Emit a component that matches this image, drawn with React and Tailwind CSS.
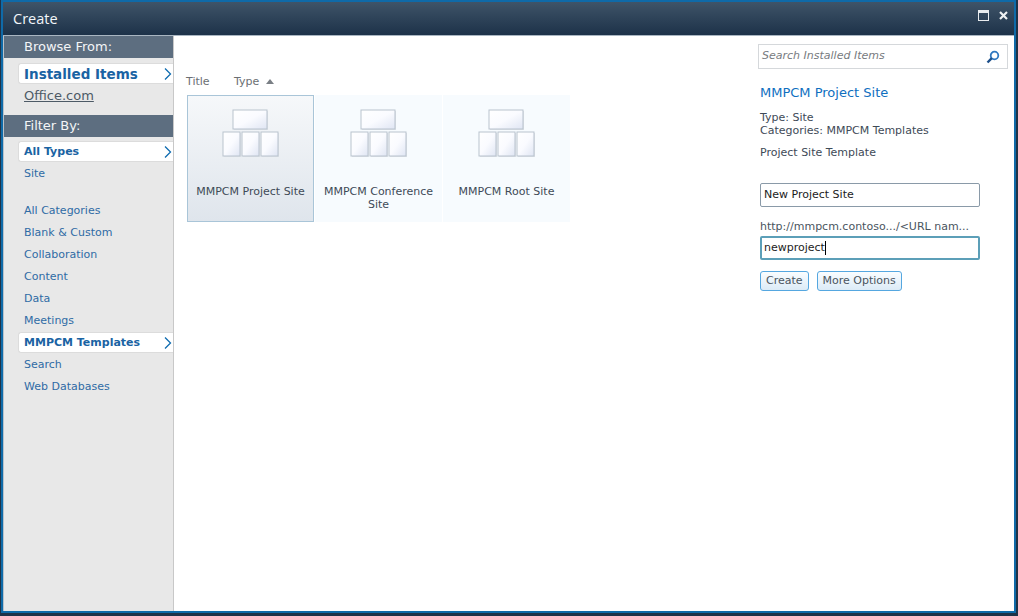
import { useId } from 'react'

const verdana = { fontFamily: "'DejaVu Sans', Verdana, sans-serif" }

function Chevron() {
  return (
    <svg width="8" height="14" viewBox="0 0 8 14" className="absolute right-[1px] top-[3px]">
      <path d="M1 1.5 L6.5 7 L1 12.5" fill="none" stroke="#0f6cb0" strokeWidth="1.3" />
    </svg>
  )
}

function NavHeader({ children }) {
  return <div className="h-[22px] bg-[#5d6e80] pl-5 text-[13px] leading-[22px] text-[#f3f5f7]">{children}</div>
}

function NavLink({ label, active, className = '' }) {
  if (active) {
    return (
      <div className={`relative ml-[14px] h-[21px] rounded-l-[3px] border border-r-0 border-[#dcdcdc] bg-white pl-[5px] text-[11px] font-bold leading-[19px] text-[#1a63a3] ${className}`}>
        {label}
        <Chevron />
      </div>
    )
  }
  return <div className={`h-[22px] pl-5 text-[11px] leading-[22px] text-[#2f6ba5] ${className}`}>{label}</div>
}

function TemplateIcon() {
  const id = useId()
  const boxes = [
    [11, 1, 34, 19],
    [1, 23, 17, 24],
    [20, 23, 17, 24],
    [39, 23, 17, 24],
  ]
  return (
    <svg width="58" height="50" viewBox="0 0 58 50">
      <defs>
        <linearGradient id={id} x1="0" y1="0" x2="1" y2="1">
          <stop offset="0" stopColor="#ffffff" />
          <stop offset="0.5" stopColor="#fafbff" />
          <stop offset="1" stopColor="#dfe5f3" />
        </linearGradient>
      </defs>
      {boxes.map(([x, y, w, h]) => (
        <g key={x + '-' + y}>
          <rect x={x + 1} y={y + 1} width={w} height={h} fill="#dfe3e8" />
          <rect x={x} y={y} width={w} height={h} fill={`url(#${id})`} stroke="#b9c3ce" />
        </g>
      ))}
    </svg>
  )
}

function Tile({ title, selected }) {
  return (
    <div
      className={
        'flex h-[127px] w-[127px] flex-col items-center pt-[13px] ' +
        (selected
          ? 'border border-[#a9c5d8] bg-gradient-to-b from-[#f6f8fa] to-[#dfe5ec]'
          : 'border border-transparent bg-[#f7fbfe]')
      }
    >
      <TemplateIcon />
      <div className="mt-[26px] w-[116px] text-center text-[11px] leading-[13px] text-[#3e4a57]">{title}</div>
    </div>
  )
}

export default function App() {
  const filters = ['All Categories', 'Blank & Custom', 'Collaboration', 'Content', 'Data', 'Meetings']

  return (
    <div className="flex h-[616px] w-[1018px] flex-col overflow-hidden bg-[#1f3348] pb-[3px] pl-[1px] pr-[2px] pt-0" style={verdana}>
      <div className="flex min-h-0 flex-1 flex-col border-[2px] border-[#0f6aa8]">
        {/* title bar */}
        <div className="flex h-[33px] shrink-0 items-center justify-between bg-gradient-to-b from-[#3f5468] to-[#1d3249] pl-[10px] pr-[6px]">
          <span className="text-[14.5px] text-[#f2f6fa]" style={{ fontFamily: "'Open Sans', sans-serif" }}>Create</span>
          <div className="flex items-center gap-[10px] pb-[6px]">
            <svg width="11" height="11" viewBox="0 0 11 11">
              <rect x="0.5" y="0.5" width="10" height="10" fill="none" stroke="#e8ecef" />
              <rect x="0" y="1" width="11" height="2" fill="#e8ecef" />
            </svg>
            <svg width="9" height="9" viewBox="0 0 9 9">
              <path d="M1 1 L8 8 M8 1 L1 8" stroke="#eef1f3" strokeWidth="2.2" />
            </svg>
          </div>
        </div>

        {/* body */}
        <div className="flex min-h-0 flex-1 border-t border-[#a9b6c2] bg-white">
          <aside className="w-[171px] shrink-0 border-l border-r border-l-[#b9c2ca] border-r-[#c8c8c8] bg-[#e8e8e8]">
            <NavHeader>Browse From:</NavHeader>
            <div className="relative ml-[14px] mt-[5px] h-[21px] rounded-l-[3px] border border-r-0 border-[#dcdcdc] bg-white pl-[5px] text-[13.5px] font-bold leading-[20px] text-[#1a63a3]">
              Installed Items
              <Chevron />
            </div>
            <div className="mt-[1px] h-[24px] pl-5 text-[13px] leading-[22px] text-[#4d5a66] underline">Office.com</div>
            <div className="mt-[6px]">
              <NavHeader>Filter By:</NavHeader>
            </div>
            <NavLink label="All Types" active className="mt-[4px]" />
            <NavLink label="Site" className="mt-[1px]" />
            <div className="h-[15px]" />
            {filters.map((f) => (
              <NavLink key={f} label={f} />
            ))}
            <NavLink label="MMPCM Templates" active />
            <NavLink label="Search" className="mt-[1px]" />
            <NavLink label="Web Databases" />
          </aside>

          <main className="flex-1 pl-[12px] pt-[35px]">
            <div className="mb-[2px] flex h-[22px] items-center text-[11px] text-[#6b6f73]">
              <span className="w-[48px]">Title</span>
              <span>Type</span>
              <svg width="8" height="5" viewBox="0 0 8 5" className="ml-[7px] mb-[2px]">
                <path d="M0 5 L4 0 L8 5 Z" fill="#7a7f85" />
              </svg>
            </div>
            <div className="flex gap-[1px] pl-[1px]">
              <Tile title="MMPCM Project Site" selected />
              <Tile title="MMPCM Conference Site" />
              <Tile title="MMPCM Root Site" />
            </div>
          </main>

          <section className="w-[258px] shrink-0 pl-[2px] pt-[8px]">
            <div className="flex h-[25px] w-[250px] items-center justify-between border border-[#d5d8db] pl-[3px] pr-[7px]">
              <span className="text-[11px] italic text-[#777b80]">Search Installed Items</span>
              <svg width="14" height="14" viewBox="0 0 14 14">
                <circle cx="8.5" cy="5.5" r="3.8" fill="none" stroke="#2f78c0" strokeWidth="1.8" />
                <path d="M5.8 8.2 L1.5 12.5" stroke="#1c4f8a" strokeWidth="2.4" />
              </svg>
            </div>
            <div className="pl-[2px]">
              <div className="mt-[15px] text-[13px] leading-[18px] text-[#0f6fbf]">MMPCM Project Site</div>
              <div className="mt-[9px] text-[11px] leading-[13px] text-[#3e4a57]">
                Type: Site
                <br />
                Categories: MMPCM Templates
              </div>
              <div className="mt-[9px] text-[11px] leading-[13px] text-[#3e4a57]">Project Site Template</div>
              <div className="mt-[24px] flex h-[24px] w-[220px] items-center rounded-[2px] border border-[#8a9aa8] pl-[3px] text-[11px] text-[#1c1c1c]">
                New Project Site
              </div>
              <div className="mt-[13px] h-[14px] whitespace-nowrap text-[11px] leading-[14px] text-[#4a5560]">http://mmpcm.contoso.../&lt;URL nam...</div>
              <div className="mt-[2px] flex h-[24px] w-[220px] items-center rounded-[2px] border-2 border-[#5c9fb8] pl-[2px] text-[11px] text-[#1c1c1c]">
                newproject
                <span className="h-[14px] w-px bg-black" />
              </div>
              <div className="mt-[11px] flex gap-[8px]">
                <button className="h-[20px] rounded-[3px] border border-[#55a7e0] bg-gradient-to-b from-[#fafdff] to-[#dcebf7] px-[5px] text-[11px] text-[#4a5560]">Create</button>
                <button className="h-[20px] rounded-[3px] border border-[#55a7e0] bg-gradient-to-b from-[#fafdff] to-[#dcebf7] px-[5px] text-[11px] text-[#4a5560]">More Options</button>
              </div>
            </div>
          </section>
        </div>
      </div>
    </div>
  )
}
